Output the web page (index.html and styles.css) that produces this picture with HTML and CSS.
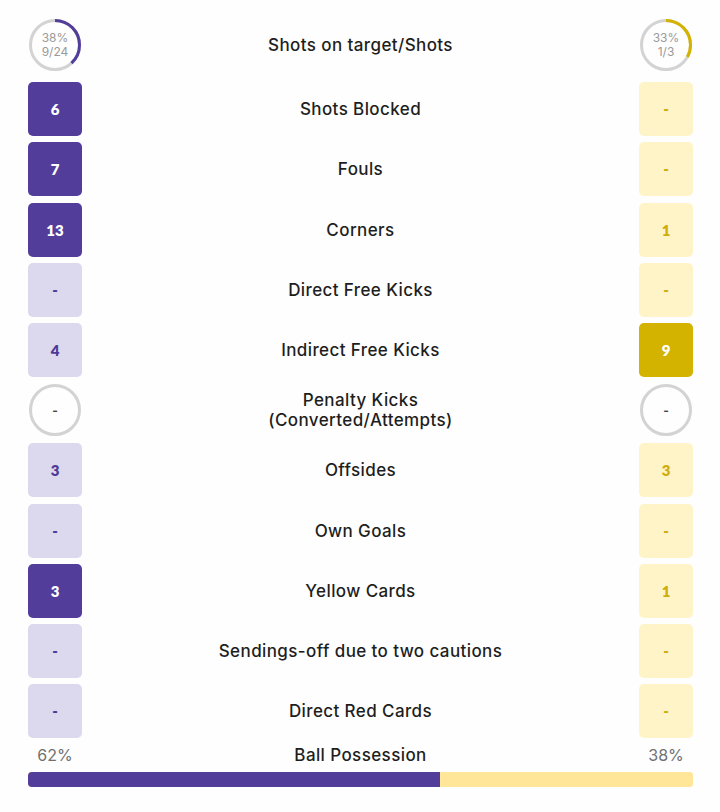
FILE: index.html
```html
<!DOCTYPE html>
<html lang="en">
<head>
<meta charset="utf-8">
<title>Match Stats</title>
<link rel="stylesheet" href="styles.css">
</head>
<body>
<main class="stats">
  <div class="row first">
    <div class="ring">
      <svg viewBox="0 0 54 54" width="54" height="54">
        <circle class="track" cx="27" cy="27" r="24.5"/>
        <circle class="prog home" cx="27" cy="27" r="24.5" stroke-dasharray="58.5 200" transform="rotate(-90 27 27)"/>
      </svg>
      <div class="ring-text"><span>38%</span><span>9/24</span></div>
    </div>
    <div class="label">Shots on target/Shots</div>
    <div class="ring">
      <svg viewBox="0 0 54 54" width="54" height="54">
        <circle class="track" cx="27" cy="27" r="24.5"/>
        <circle class="prog away" cx="27" cy="27" r="24.5" stroke-dasharray="50.8 200" transform="rotate(-90 27 27)"/>
      </svg>
      <div class="ring-text"><span>33%</span><span>1/3</span></div>
    </div>
  </div>

  <div class="row"><div class="box home-win">6</div><div class="label">Shots Blocked</div><div class="box away-lose">-</div></div>
  <div class="row"><div class="box home-win">7</div><div class="label">Fouls</div><div class="box away-lose">-</div></div>
  <div class="row"><div class="box home-win">13</div><div class="label">Corners</div><div class="box away-lose">1</div></div>
  <div class="row"><div class="box home-lose">-</div><div class="label">Direct Free Kicks</div><div class="box away-lose">-</div></div>
  <div class="row"><div class="box home-lose">4</div><div class="label">Indirect Free Kicks</div><div class="box away-win">9</div></div>
  <div class="row">
    <div class="ring empty"><span class="dash">-</span></div>
    <div class="label two"><span>Penalty Kicks</span><span>(Converted/Attempts)</span></div>
    <div class="ring empty"><span class="dash">-</span></div>
  </div>
  <div class="row"><div class="box home-lose">3</div><div class="label">Offsides</div><div class="box away-lose">3</div></div>
  <div class="row"><div class="box home-lose">-</div><div class="label">Own Goals</div><div class="box away-lose">-</div></div>
  <div class="row"><div class="box home-win">3</div><div class="label">Yellow Cards</div><div class="box away-lose">1</div></div>
  <div class="row"><div class="box home-lose">-</div><div class="label">Sendings-off due to two cautions</div><div class="box away-lose">-</div></div>
  <div class="row"><div class="box home-lose">-</div><div class="label">Direct Red Cards</div><div class="box away-lose">-</div></div>

  <div class="possession">
    <div class="poss-head">
      <span class="pct">62%</span>
      <span class="label">Ball Possession</span>
      <span class="pct">38%</span>
    </div>
    <div class="bar">
      <div class="bar-home" style="width:62%"></div>
      <div class="bar-away"></div>
    </div>
  </div>
</main>
</body>
</html>
```

FILE: styles.css
```css
* { box-sizing: border-box; }
html, body {
  margin: 0;
  padding: 0;
  background: #fefefe;
}
body {
  font-family: Inter, "Open Sans", sans-serif;
  color: #1c1c1c;
  width: 720px;
}
.stats {
  padding: 18px 27px 0 28px;
  display: flex;
  flex-direction: column;
  gap: 6.2px;
}
.row {
  display: grid;
  grid-template-columns: 54px 1fr 54px;
  align-items: center;
  height: 54px;
}
.row.first { margin-bottom: 4px; }
.label {
  text-align: center;
  font-size: 17px;
  font-weight: 500;
  letter-spacing: 0.4px;
  line-height: 20px;
  color: #1e1e1e;
}
.label.two {
  display: flex;
  flex-direction: column;
  align-items: center;
}
.box {
  width: 54px;
  height: 54px;
  border-radius: 5px;
  display: flex;
  align-items: center;
  justify-content: center;
  font-family: Lato, Inter, sans-serif;
  font-size: 15px;
  font-weight: 800;
}
.home-win { background: #533d9b; color: #ffffff; }
.home-lose { background: #dcd8ee; color: #4f3a96; }
.away-win { background: #d4b200; color: #ffffff; }
.away-lose { background: #fff4c8; color: #d0ad0b; }

.ring {
  position: relative;
  width: 54px;
  height: 54px;
  display: flex;
  align-items: center;
  justify-content: center;
}
.ring svg { position: absolute; left: 0; top: 0; }
.track { fill: none; stroke: #d3d3d3; stroke-width: 3; }
.prog { fill: none; stroke-width: 3; }
.prog.home { stroke: #533d9b; }
.prog.away { stroke: #d4b200; }
.ring.empty {
  border: 3px solid #d3d3d3;
  border-radius: 50%;
  width: 52px;
  height: 52px;
  margin-left: 1px;
}
.ring-text {
  position: relative;
  display: flex;
  flex-direction: column;
  align-items: center;
  font-size: 12px;
  line-height: 14.5px;
  color: #9a9a9a;
  font-weight: 400;
}
.dash { color: #444; font-size: 12px; font-weight: 700; }

.possession {
  margin-top: 0;
}
.poss-head {
  display: grid;
  grid-template-columns: 54px 1fr 54px;
  align-items: center;
  height: 22px;
}
.pct {
  text-align: center;
  font-size: 16px;
  color: #707070;
  font-weight: 400;
}
.bar {
  margin-top: 6px;
  display: flex;
  height: 15px;
  border-radius: 4px;
  overflow: hidden;
  background: #ffe699;
}
.bar-home { background: #533d9b; }
.bar-away { flex: 1; background: #ffe699; }
```
